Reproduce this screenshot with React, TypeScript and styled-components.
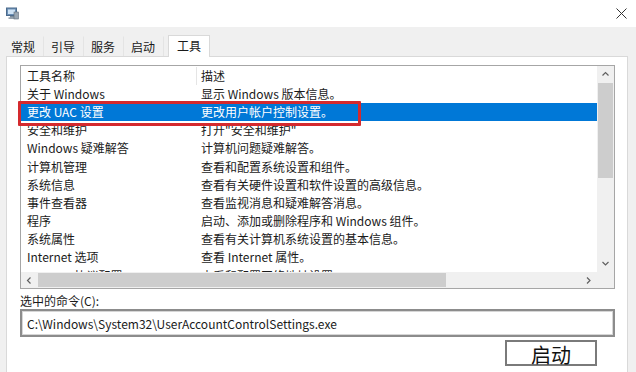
import React from "react";
import styled, {createGlobalStyle} from "styled-components";

const GlobalStyle = createGlobalStyle`
  html, body {
    margin: 0;
    padding: 0;
  }
  body {
    font-family: "Noto Sans CJK SC", "Noto Sans", sans-serif;
    background: #ffffff;
    color: #1a1a1a;
  }
`

const Window = styled.div`
  width: 636px;
  height: 372px;
  display: flex;
  flex-direction: column;
  overflow: hidden;
  background: #ffffff;
`

const TitleBar = styled.div`
  height: 27px;
  flex: none;
  display: flex;
  align-items: center;
  justify-content: space-between;
  padding: 0 9px 0 6px;
`

const Body = styled.div`
  flex: 1;
  display: flex;
  flex-direction: column;
  background: #f0f0f0;
  padding: 0 8px 0 6px;
`

const TabStrip = styled.div`
  height: 29px;
  flex: none;
  display: flex;
  align-items: flex-end;
  margin-left: -2px;
`

const Tab = styled.div<{ $active?: boolean }>`
  height: ${p => p.$active ? 22 : 20}px;
  padding: 0 8px 0 ${p => p.$active ? 8 : 7}px;
  padding-bottom: ${p => p.$active ? 3 : 1}px;
  margin-bottom: ${p => p.$active ? -1 : 0}px;
  margin-left: ${p => p.$active ? 4 : 0}px;
  display: flex;
  align-items: center;
  font-size: 12px;
  color: #1a1a1a;
  background: ${p => p.$active ? '#ffffff' : '#f0f0f0'};
  border: 1px solid ${p => p.$active ? '#d9d9d9' : 'transparent'};
  border-bottom: none;
  border-left: ${p => p.$active ? '1px solid #d9d9d9' : 'none'};
  border-right: 1px solid ${p => p.$active ? '#d9d9d9' : '#e4e4e4'};
  position: relative;
  z-index: ${p => p.$active ? 1 : 0};
  box-sizing: border-box;
`

const Panel = styled.div`
  flex: 1;
  display: flex;
  flex-direction: column;
  background: #ffffff;
  border: 1px solid #d9d9d9;
  border-bottom: none;
  padding: 8px 12px 0 13px;
`

const ListBox = styled.div`
  position: relative;
  height: 224px;
  flex: none;
  box-sizing: border-box;
  border: 1px solid #a6a6a6;
  display: grid;
  grid-template-columns: 1fr 17px;
  grid-template-rows: 1fr 16px;
`

const Rows = styled.div`
  overflow: hidden;
  padding-top: 0.5px;
`

const Row = styled.div<{ $selected?: boolean }>`
  height: 18.2px;
  display: grid;
  grid-template-columns: 176px 1fr;
  align-items: center;
  font-size: 12px;
  line-height: 18px;
  white-space: nowrap;
  background: ${p => p.$selected ? '#0078d7' : 'transparent'};
  color: ${p => p.$selected ? '#ffffff' : '#1a1a1a'};
`

const NameCell = styled.div<{ $header?: boolean }>`
  padding-left: 6px;
  height: 100%;
  display: flex;
  align-items: center;
  border-right: 1px solid ${p => p.$header ? '#e5e5e5' : 'transparent'};
`

const DescCell = styled.div`
  padding-left: 4px;
`

const VScroll = styled.div`
  background: #f0f0f0;
  display: flex;
  flex-direction: column;
`

const ArrowBox = styled.div`
  height: 17px;
  width: 17px;
  flex: none;
  display: flex;
  align-items: center;
  justify-content: center;
`

const VThumb = styled.div`
  height: 95px;
  margin: 0 1px;
  background: #cdcdcd;
`

const Spacer = styled.div`
  flex: 1;
`

const HScroll = styled.div`
  background: #f0f0f0;
  display: flex;
  align-items: center;
`

const HThumb = styled.div`
  width: 408px;
  height: 14px;
  background: #cdcdcd;
`

const Corner = styled.div`
  background: #f0f0f0;
`

const Highlight = styled.div`
  position: absolute;
  left: -3px;
  top: 35px;
  width: 343px;
  height: 25px;
  box-sizing: border-box;
  border: 3px solid #d42a2e;
  border-radius: 1px;
  pointer-events: none;
`

const Label = styled.div`
  margin-top: 3px;
  font-size: 12px;
  line-height: 17px;
  color: #1a1a1a;
`

const CommandBox = styled.div`
  height: 28px;
  box-sizing: border-box;
  border: 2px solid #8c8c8c;
  box-shadow: inset 0 0 0 1px #d6d6d6;
  display: flex;
  align-items: center;
  padding-left: 5px;
  font-size: 12px;
  color: #1a1a1a;
`

const ButtonRow = styled.div`
  display: flex;
  justify-content: flex-end;
  margin-top: 3px;
  padding-right: 18px;
`

const Button = styled.div`
  width: 92px;
  height: 26px;
  box-sizing: border-box;
  border: 2px solid #7a7a7a;
  display: flex;
  align-items: center;
  justify-content: center;
  font-size: 20px;
  line-height: 1;
  padding-top: 3px;
  color: #111;
`

const Chevron = ({dir}: { dir: 'up' | 'down' | 'left' | 'right' }) => {
    const d = {
        up: 'M1.5 5.5 L4.5 2.5 L7.5 5.5',
        down: 'M1.5 3 L4.5 6 L7.5 3',
        left: 'M5.5 1.5 L2.5 4.5 L5.5 7.5',
        right: 'M3 1.5 L6 4.5 L3 7.5',
    }[dir]
    return (
        <svg width="9" height="9" viewBox="0 0 9 9">
            <path d={d} fill="none" stroke="#606060" strokeWidth="1.2"/>
        </svg>
    )
}

const AppIcon = () => (
    <svg width="13" height="13" viewBox="0 0 13 13">
        <rect x="0.5" y="1" width="10" height="7.5" fill="#6b8fb5" stroke="#4b6a8c"/>
        <rect x="2" y="2.5" width="7" height="4.5" fill="#cfe3f5"/>
        <rect x="4" y="9" width="4" height="1.5" fill="#7a8a99"/>
        <rect x="2.5" y="10.5" width="7" height="1.2" fill="#6b7b8a"/>
        <rect x="8" y="5" width="4.5" height="7" fill="#9aa7b3" stroke="#5f6d7a" strokeWidth="0.6"/>
    </svg>
)

const CloseIcon = () => (
    <svg width="11" height="11" viewBox="0 0 11 11">
        <path d="M0.5 0.5 L10.5 10.5 M10.5 0.5 L0.5 10.5" stroke="#333" strokeWidth="1"/>
    </svg>
)

const tabs = ['常规', '引导', '服务', '启动', '工具']

const tools: [string, string][] = [
    ['关于 Windows', '显示 Windows 版本信息。'],
    ['更改 UAC 设置', '更改用户帐户控制设置。'],
    ['安全和维护', '打开"安全和维护"'],
    ['Windows 疑难解答', '计算机问题疑难解答。'],
    ['计算机管理', '查看和配置系统设置和组件。'],
    ['系统信息', '查看有关硬件设置和软件设置的高级信息。'],
    ['事件查看器', '查看监视消息和疑难解答消息。'],
    ['程序', '启动、添加或删除程序和 Windows 组件。'],
    ['系统属性', '查看有关计算机系统设置的基本信息。'],
    ['Internet 选项', '查看 Internet 属性。'],
    ['Internet 协议配置', '查看和配置网络地址设置。'],
]

function App() {
    return (
        <Window>
            <GlobalStyle/>
            <TitleBar>
                <AppIcon/>
                <CloseIcon/>
            </TitleBar>
            <Body>
                <TabStrip>
                    {tabs.map(t => <Tab key={t} $active={t === '工具'}>{t}</Tab>)}
                </TabStrip>
                <Panel>
                    <ListBox>
                        <Rows>
                            <Row>
                                <NameCell $header>工具名称</NameCell>
                                <DescCell>描述</DescCell>
                            </Row>
                            {tools.map(([name, desc]) => (
                                <Row key={name} $selected={name === '更改 UAC 设置'}>
                                    <NameCell>{name}</NameCell>
                                    <DescCell>{desc}</DescCell>
                                </Row>
                            ))}
                        </Rows>
                        <VScroll>
                            <ArrowBox><Chevron dir="up"/></ArrowBox>
                            <VThumb/>
                            <Spacer/>
                            <ArrowBox><Chevron dir="down"/></ArrowBox>
                        </VScroll>
                        <HScroll>
                            <ArrowBox><Chevron dir="left"/></ArrowBox>
                            <HThumb/>
                            <Spacer/>
                            <ArrowBox><Chevron dir="right"/></ArrowBox>
                        </HScroll>
                        <Corner/>
                        <Highlight/>
                    </ListBox>
                    <Label>选中的命令(C):</Label>
                    <CommandBox>C:\Windows\System32\UserAccountControlSettings.exe</CommandBox>
                    <ButtonRow>
                        <Button>启动</Button>
                    </ButtonRow>
                </Panel>
            </Body>
        </Window>
    );
}

export default App
